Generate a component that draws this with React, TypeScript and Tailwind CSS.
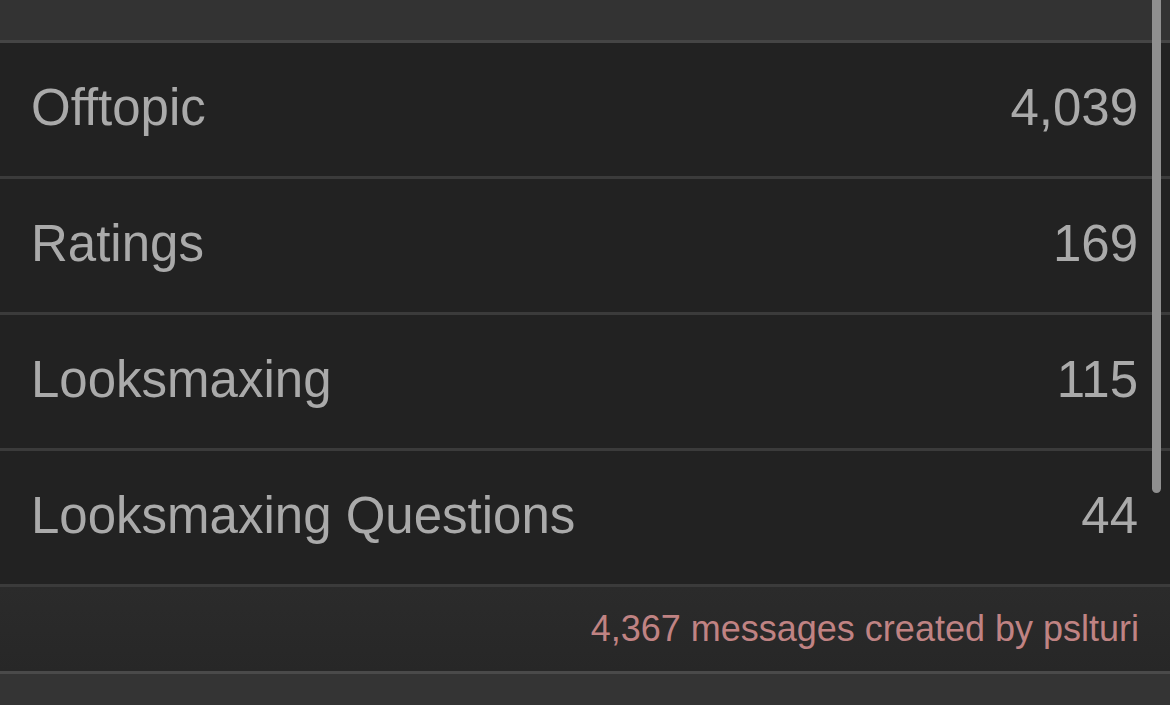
const rows = [
  { name: "Offtopic", count: "4,039" },
  { name: "Ratings", count: "169" },
  { name: "Looksmaxing", count: "115" },
  { name: "Looksmaxing Questions", count: "44" },
];

export default function App() {
  return (
    <div
      className="relative h-[705px] w-[1170px] overflow-hidden bg-[#343434]"
      style={{ fontFamily: '"Liberation Sans", Arial, sans-serif' }}
    >
      {/* Top bar */}
      <div className="h-[40px] bg-[#333333] border-b-[3px] border-[#454545] box-content" />

      {/* Forum rows */}
      {rows.map((row) => (
        <div
          key={row.name}
          className="flex h-[128px] items-center justify-between border-b-[3px] border-[#3b3b3b] bg-[#222222] pb-[5px] pl-[31px] pr-[32px] text-[51px] text-[#aaaaaa] box-content"
        >
          <span className="leading-none">{row.name}</span>
          <span className="leading-none">{row.count}</span>
        </div>
      ))}

      {/* Footer */}
      <div className="flex h-[84px] items-center justify-end border-b-[3px] border-[#4a4a4a] bg-gradient-to-b from-[#2b2b2b] to-[#272727] pr-[31px] box-content">
        <span className="text-[36px] leading-none text-[#c08383]">
          4,367 messages created by pslturi
        </span>
      </div>

      {/* Scroll indicator */}
      <div className="absolute left-[1152px] top-[-10px] h-[503px] w-[9px] rounded-full bg-[#8f8f8f]" />
    </div>
  );
}
